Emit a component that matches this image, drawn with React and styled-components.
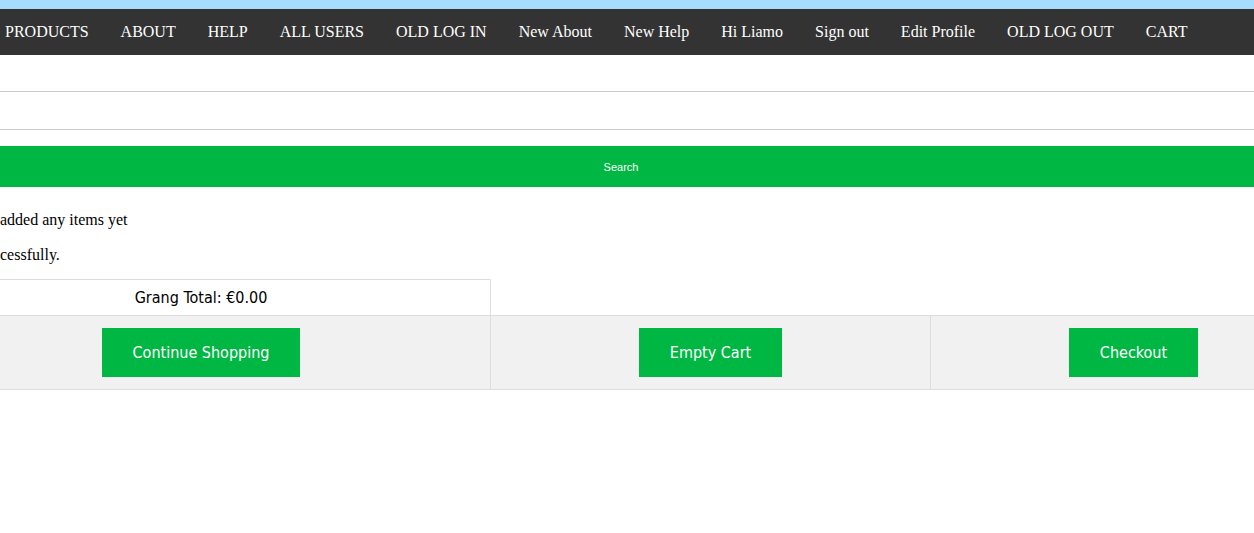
import React from 'react'
import styled, { createGlobalStyle } from 'styled-components'

const GlobalStyle = createGlobalStyle`
  html, body {
    margin: 0;
    padding: 0;
    background: #fff;
    overflow: hidden;
  }
  body {
    font-family: "Liberation Serif", "Times New Roman", serif;
  }
`

const TopStrip = styled.div`
  height: 9px;
  background: #a6dcff;
`

const NavBar = styled.nav`
  display: flex;
  align-items: center;
  height: 46px;
  background: #333;
  padding-left: 5px;
  gap: 32px;
  white-space: nowrap;
`

const NavLink = styled.a`
  color: #fff;
  font-size: 16px;
  font-family: "Liberation Serif", "Times New Roman", serif;
  text-decoration: none;
  cursor: pointer;
`

const SearchForm = styled.form`
  display: flex;
  flex-direction: column;
  margin-top: -1px;
`

const TextInput = styled.input`
  height: 37px;
  border: 0;
  border-bottom: 1px solid #ccc;
  padding: 0 8px;
  outline: none;
  font-size: 14px;
  background: transparent;
`

const SearchButton = styled.button`
  margin-top: 16px;
  height: 41px;
  border: 0;
  padding: 0 12px 0 0;
  background: #00b744;
  color: #fff;
  font-family: "Liberation Sans", Arial, sans-serif;
  font-size: 11px;
  cursor: pointer;
`

const Messages = styled.div`
  padding-top: 24px;
  display: flex;
  flex-direction: column;
  gap: 17px;
`

const Message = styled.p`
  margin: 0;
  font-size: 16px;
  line-height: 18px;
  color: #000;
`

const Viewport = styled.div`
  overflow: hidden;
  margin-top: 15px;
`

const CartTable = styled.div`
  margin-left: -88px;
  width: 1424px;
  display: grid;
  grid-template-columns: 579px 440px 405px;
  font-family: "DejaVu Sans Condensed", Tahoma, sans-serif;
`

const TotalCell = styled.div`
  height: 35px;
  display: flex;
  align-items: center;
  justify-content: center;
  border-top: 1px solid #ddd;
  border-right: 1px solid #ddd;
  font-size: 16px;
  color: #000;
`

const Spacer = styled.div`
  grid-column: span 2;
`

const ActionCell = styled.div`
  display: flex;
  align-items: center;
  justify-content: center;
  height: 73px;
  background: #f1f1f1;
  border-top: 1px solid #ddd;
  border-bottom: 1px solid #ddd;
  border-right: ${(p) => (p.last ? '0' : '1px solid #ddd')};
`

const GreenButton = styled.a`
  display: inline-flex;
  align-items: center;
  height: 49px;
  padding: 0 31px;
  background: #00b744;
  color: #fff;
  font-size: 16px;
  text-decoration: none;
  cursor: pointer;
`

const links = [
  'PRODUCTS', 'ABOUT', 'HELP', 'ALL USERS', 'OLD LOG IN', 'New About',
  'New Help', 'Hi Liamo', 'Sign out', 'Edit Profile', 'OLD LOG OUT', 'CART',
]

const App = () => {
  return (
    <>
      <GlobalStyle />
      <TopStrip />
      <NavBar>
        {links.map((l) => (
          <NavLink key={l}>{l}</NavLink>
        ))}
      </NavBar>
      <SearchForm onSubmit={(e) => e.preventDefault()}>
        <TextInput type="text" />
        <TextInput type="text" />
        <SearchButton type="submit">Search</SearchButton>
      </SearchForm>
      <Messages>
        <Message>added any items yet</Message>
        <Message>cessfully.</Message>
      </Messages>
      <Viewport>
        <CartTable>
          <TotalCell>Grang Total: €0.00</TotalCell>
          <Spacer />
          <ActionCell>
            <GreenButton>Continue Shopping</GreenButton>
          </ActionCell>
          <ActionCell>
            <GreenButton>Empty Cart</GreenButton>
          </ActionCell>
          <ActionCell last>
            <GreenButton>Checkout</GreenButton>
          </ActionCell>
        </CartTable>
      </Viewport>
    </>
  )
}

export default App
